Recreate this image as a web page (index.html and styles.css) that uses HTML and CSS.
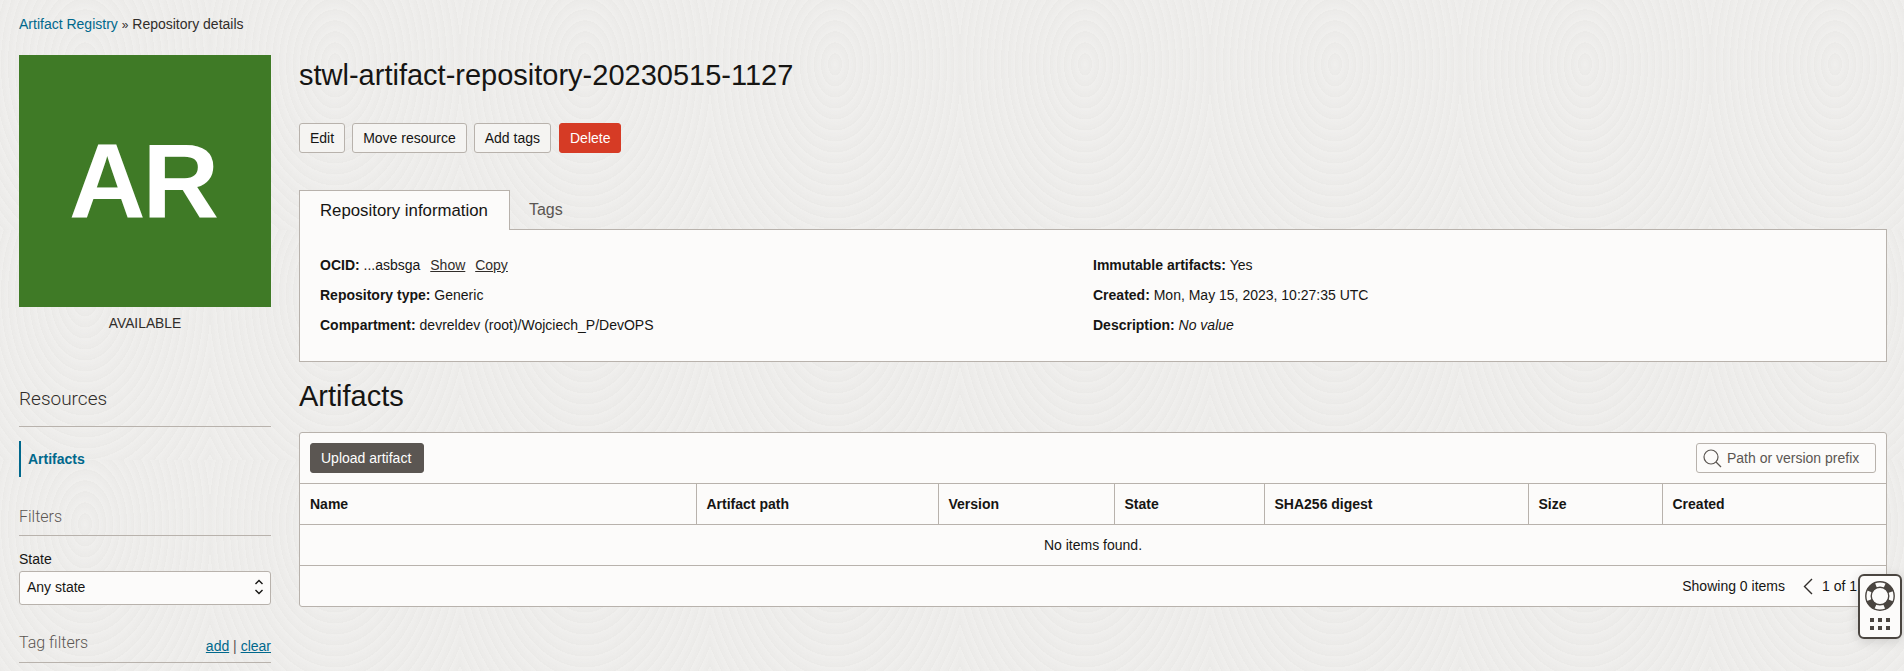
FILE: index.html
```html
<!DOCTYPE html>
<html lang="en">
<head>
  <meta charset="UTF-8">
  <title>Repository details</title>
  <link rel="stylesheet" href="styles.css">
</head>
<body>

  <div class="breadcrumb">
    <a href="#">Artifact Registry</a> <span class="sep">»</span> Repository details
  </div>

  <div class="page">
    <aside class="sidebar">
      <div class="resource-icon">AR</div>
      <div class="resource-state">AVAILABLE</div>

      <h3 class="side-title resources-title">Resources</h3>
      <div class="side-menu"><a href="#">Artifacts</a></div>

      <h4 class="side-title filters-title">Filters</h4>
      <label class="filter-label">State</label>
      <div class="select-box">
        <span>Any state</span>
        <svg width="10" height="18" viewBox="0 0 10 18" fill="none" stroke="#161513" stroke-width="1.4">
          <path d="M1.5 6 5 2.5 8.5 6"/>
          <path d="M1.5 12 5 15.5 8.5 12"/>
        </svg>
      </div>

      <div class="side-title tag-title">
        <span>Tag filters</span>
        <span class="tag-links"><a href="#">add</a> | <a href="#">clear</a></span>
      </div>
    </aside>

    <main class="content">
      <h1>stwl-artifact-repository-20230515-1127</h1>

      <div class="actions">
        <button class="btn">Edit</button>
        <button class="btn">Move resource</button>
        <button class="btn">Add tags</button>
        <button class="btn btn-danger">Delete</button>
      </div>

      <div class="tabs">
        <div class="tab active">Repository information</div>
        <div class="tab">Tags</div>
      </div>

      <section class="info-panel">
        <div class="info-col">
          <div><b>OCID:</b> ...asbsga <a class="plain-link first" href="#">Show</a> <a class="plain-link" href="#">Copy</a></div>
          <div><b>Repository type:</b> Generic</div>
          <div><b>Compartment:</b> devreldev (root)/Wojciech_P/DevOPS</div>
        </div>
        <div class="info-col">
          <div><b>Immutable artifacts:</b> Yes</div>
          <div><b>Created:</b> Mon, May 15, 2023, 10:27:35 UTC</div>
          <div><b>Description:</b> <i>No value</i></div>
        </div>
      </section>

      <h2>Artifacts</h2>

      <section class="table-panel">
        <div class="toolbar">
          <button class="btn btn-dark">Upload artifact</button>
          <div class="search-box">
            <svg width="19" height="19" viewBox="0 0 19 19" fill="none" stroke="#5b5652" stroke-width="1.2">
              <circle cx="8" cy="8" r="7"/>
              <path d="M13 13l5 5"/>
            </svg>
            <span>Path or version prefix</span>
          </div>
        </div>

        <table>
          <thead>
            <tr>
              <th class="col-name">Name</th>
              <th class="col-path">Artifact path</th>
              <th class="col-version">Version</th>
              <th class="col-state">State</th>
              <th class="col-sha">SHA256 digest</th>
              <th class="col-size">Size</th>
              <th>Created</th>
            </tr>
          </thead>
          <tbody>
            <tr><td colspan="7">No items found.</td></tr>
          </tbody>
        </table>

        <div class="table-footer">
          <span>Showing 0 items</span>
          <svg class="pager-arrow" width="10" height="17" viewBox="0 0 10 17" fill="none" stroke="#312d2a" stroke-width="1.4">
            <path d="M9 1 1.5 8.5 9 16"/>
          </svg>
          <span>1 of 1</span>
          <svg class="pager-next" width="10" height="17" viewBox="0 0 10 17" fill="none" stroke="#312d2a" stroke-width="1.4">
            <path d="M1 1 8.5 8.5 1 16"/>
          </svg>
        </div>
      </section>
    </main>
  </div>

  <!-- help widget -->
  <div class="help-widget">
    <svg width="30" height="30" viewBox="0 0 30 30" fill="none">
      <circle cx="15" cy="15" r="11.5" stroke="#4a4540" stroke-width="6" stroke-dasharray="9.06 9" stroke-dashoffset="-4.5"/>
      <circle cx="15" cy="15" r="14.2" stroke="#4a4540" stroke-width="1.4"/>
      <circle cx="15" cy="15" r="8.8" stroke="#4a4540" stroke-width="1.4"/>
    </svg>
    <div class="help-dots">
      <i></i><i></i><i></i><i></i><i></i><i></i>
    </div>
  </div>

</body>
</html>
```

FILE: styles.css
```css
html, body {
  height: 100%;
}

body {
  margin: 0;
  overflow: hidden;
  font-family: 'Liberation Sans', Arial, sans-serif;
  font-size: 14px;
  color: #161513;
  background-color: #edecea;
  background-image:
    repeating-radial-gradient(ellipse 7px 11px at 50% 28%, rgba(255,255,255,0.16), rgba(0,0,0,0.008));
  background-size: 250px 230px;
  background-position: -40px 0;
}

a {
  color: #00688c;
}

.breadcrumb {
  padding: 16px 19px 0;
  height: 39px;
  box-sizing: border-box;
  line-height: 17px;
  color: #312d2a;
}

.breadcrumb a {
  text-decoration: none;
}

.sep {
  font-size: 12px;
}

.page {
  display: flex;
  gap: 28px;
  padding-left: 19px;
  padding-right: 17px;
}

/* left column */
.sidebar {
  width: 252px;
  flex: none;
}

.resource-icon {
  height: 252px;
  margin-top: 16px;
  padding-right: 5px;
  box-sizing: border-box;
  background: #3f7a26;
  color: #ffffff;
  font-size: 106px;
  font-weight: bold;
  letter-spacing: -3px;
  text-align: center;
  line-height: 252px;
}

.resource-state {
  margin-top: 9px;
  text-align: center;
  line-height: 16px;
  font-size: 13.8px;
  color: #312d2a;
}

.side-title {
  margin: 0;
  font-family: Roboto, sans-serif;
  font-weight: 300;
  color: #312d2a;
  border-bottom: 1px solid #b8b2ac;
}

.resources-title {
  margin-top: 56px;
  height: 38px;
  line-height: 22px;
  font-size: 19px;
}

.side-menu {
  margin-top: 14px;
  height: 36px;
  border-left: 2px solid #00688c;
  padding-left: 7px;
  line-height: 36px;
}

.side-menu a {
  font-weight: bold;
  text-decoration: none;
}

.filters-title {
  margin-top: 30px;
  height: 28px;
  line-height: 20px;
  font-size: 16px;
  color: #5b5652;
}

.filter-label {
  display: block;
  margin-top: 15px;
  line-height: 16px;
}

.select-box {
  margin-top: 4px;
  height: 34px;
  box-sizing: border-box;
  background: #fcfbfa;
  border: 1px solid #b8b2ac;
  border-radius: 3px;
  padding: 0 6px 2px 7px;
  display: flex;
  align-items: center;
  justify-content: space-between;
}

.tag-title {
  margin-top: 27px;
  height: 30px;
  line-height: 22px;
  font-size: 16px;
  color: #5b5652;
  display: flex;
  justify-content: space-between;
}

.tag-links {
  font-family: 'Liberation Sans', Arial, sans-serif;
  font-weight: normal;
  font-size: 14px;
  line-height: 28px;
}

/* main column */
.content {
  flex: 1;
  min-width: 0;
}

h1 {
  margin: 0;
  height: 84px;
  line-height: 72px;
  font-size: 29px;
  font-weight: normal;
}

.actions {
  display: flex;
  gap: 7px;
}

.btn {
  height: 30px;
  padding: 0 10px;
  border: 1px solid #b8b2ac;
  border-radius: 3px;
  background: #f5f4f2;
  color: #161513;
  font-family: inherit;
  font-size: 14px;
  cursor: pointer;
}

.btn-danger {
  margin-left: 1px;
  background: #d63b25;
  border-color: #d63b25;
  color: #ffffff;
}

.btn-dark {
  padding: 0 12px 0 10px;
  background: #5b5652;
  border-color: #5b5652;
  color: #ffffff;
}

.tabs {
  display: flex;
  margin-top: 37px;
  height: 40px;
  position: relative;
  z-index: 1;
}

.tab {
  padding: 0 19px;
  line-height: 40px;
  font-size: 16px;
  color: #5b5652;
}

.tab.active {
  padding: 0 21px 0 20px;
  font-size: 16.8px;
  background: #fcfbfa;
  border: 1px solid #b8b2ac;
  border-bottom: none;
  color: #161513;
}

.info-panel {
  margin-top: -1px;
  height: 133px;
  box-sizing: border-box;
  background: #fcfbfa;
  border: 1px solid #b8b2ac;
  padding: 20px 20px 0;
  display: grid;
  grid-template-columns: 773px 1fr;
}

.info-col div {
  height: 30px;
  line-height: 30px;
}

.plain-link {
  color: #312d2a;
  margin-left: 6px;
}

.plain-link.first {
  margin-left: 6px;
}

h2 {
  margin: 15px 0 0;
  height: 55px;
  line-height: 38px;
  font-size: 29px;
  font-weight: normal;
}

.table-panel {
  background: #fcfbfa;
  border: 1px solid #b8b2ac;
  border-radius: 3px;
}

.toolbar {
  height: 50px;
  box-sizing: border-box;
  padding: 10px 10px 0;
  display: flex;
  justify-content: space-between;
  align-items: flex-start;
}

.search-box {
  width: 180px;
  height: 30px;
  box-sizing: border-box;
  border: 1px solid #b8b2ac;
  border-radius: 3px;
  display: flex;
  align-items: center;
  gap: 5px;
  padding-left: 6px;
  color: #5b5652;
}

table {
  width: 100%;
  border-collapse: collapse;
  table-layout: fixed;
}

th {
  box-sizing: border-box;
  height: 41px;
  padding: 0 10px;
  text-align: left;
  border-top: 1px solid #b8b2ac;
  border-bottom: 1px solid #b8b2ac;
  border-left: 1px solid #b8b2ac;
}

th:first-child {
  border-left: none;
}

td {
  height: 40px;
  padding: 0;
  text-align: center;
  border-bottom: 1px solid #b8b2ac;
}

.col-name { width: 396px; }
.col-path { width: 242px; }
.col-version { width: 176px; }
.col-state { width: 150px; }
.col-sha { width: 264px; }
.col-size { width: 134px; }

.table-footer {
  height: 40px;
  display: flex;
  align-items: center;
  justify-content: flex-end;
  padding-right: 10px;
}

.pager-arrow {
  margin: 0 9px 0 18px;
}

.pager-next {
  margin-left: 9px;
}

/* floating widget, sits over the table */
.help-widget {
  position: fixed;
  left: 1858px;
  top: 574px;
  width: 44px;
  height: 65px;
  box-sizing: border-box;
  background: #fcfbfa;
  border: 2px solid #4a4540;
  border-radius: 6px;
  box-shadow: 0 2px 12px rgba(0,0,0,0.14);
  display: flex;
  flex-direction: column;
  align-items: center;
  padding-top: 5px;
}

.help-dots {
  margin-top: 7px;
  display: grid;
  grid-template-columns: repeat(3, 4px);
  gap: 4px;
}

.help-dots i {
  height: 4px;
  background: #4a4540;
}
```
